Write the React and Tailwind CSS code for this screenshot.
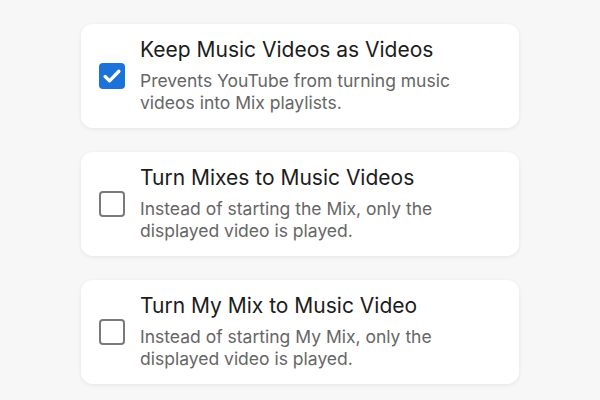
import React from "react";

const options = [
  {
    title: "Keep Music Videos as Videos",
    desc: "Prevents YouTube from turning music videos into Mix playlists.",
    checked: true,
  },
  {
    title: "Turn Mixes to Music Videos",
    desc: "Instead of starting the Mix, only the displayed video is played.",
    checked: false,
  },
  {
    title: "Turn My Mix to Music Video",
    desc: "Instead of starting My Mix, only the displayed video is played.",
    checked: false,
  },
];

function Checkbox({ checked }) {
  if (checked) {
    return (
      <div className="w-[26px] h-[26px] shrink-0 rounded-[4px] bg-[#1b72d8] flex items-center justify-center">
        <svg width="22" height="22" viewBox="0 0 24 24" fill="none">
          <path d="M4.5 12.5l4.8 4.8L19.5 6.8" stroke="white" strokeWidth="3.6" strokeLinecap="round" strokeLinejoin="round" />
        </svg>
      </div>
    );
  }
  return <div className="w-[26px] h-[26px] shrink-0 rounded-[4px] border-2 border-[#7a7a7a] bg-white"></div>;
}

export default function App() {
  return (
    <div className="min-h-[400px] w-[600px] bg-[#f7f7f7] pt-[24px] flex flex-col items-center gap-[24px] font-['Inter',sans-serif]">
      {options.map((o) => (
        <div key={o.title} className="w-[438px] h-[104px] bg-white rounded-[12px] shadow-[0_1px_4px_rgba(0,0,0,0.08)] flex items-center pl-[18px] pr-[20px]">
          <Checkbox checked={o.checked} />
          <div className="ml-[15px] flex flex-col -mt-[2px]">
            <div className="text-[21px] leading-[26px] font-normal text-[#1c1c1c] mb-[7px]">{o.title}</div>
            <div className="text-[17.5px] leading-[22px] text-[#666666] w-[345px]">{o.desc}</div>
          </div>
        </div>
      ))}
    </div>
  );
}
